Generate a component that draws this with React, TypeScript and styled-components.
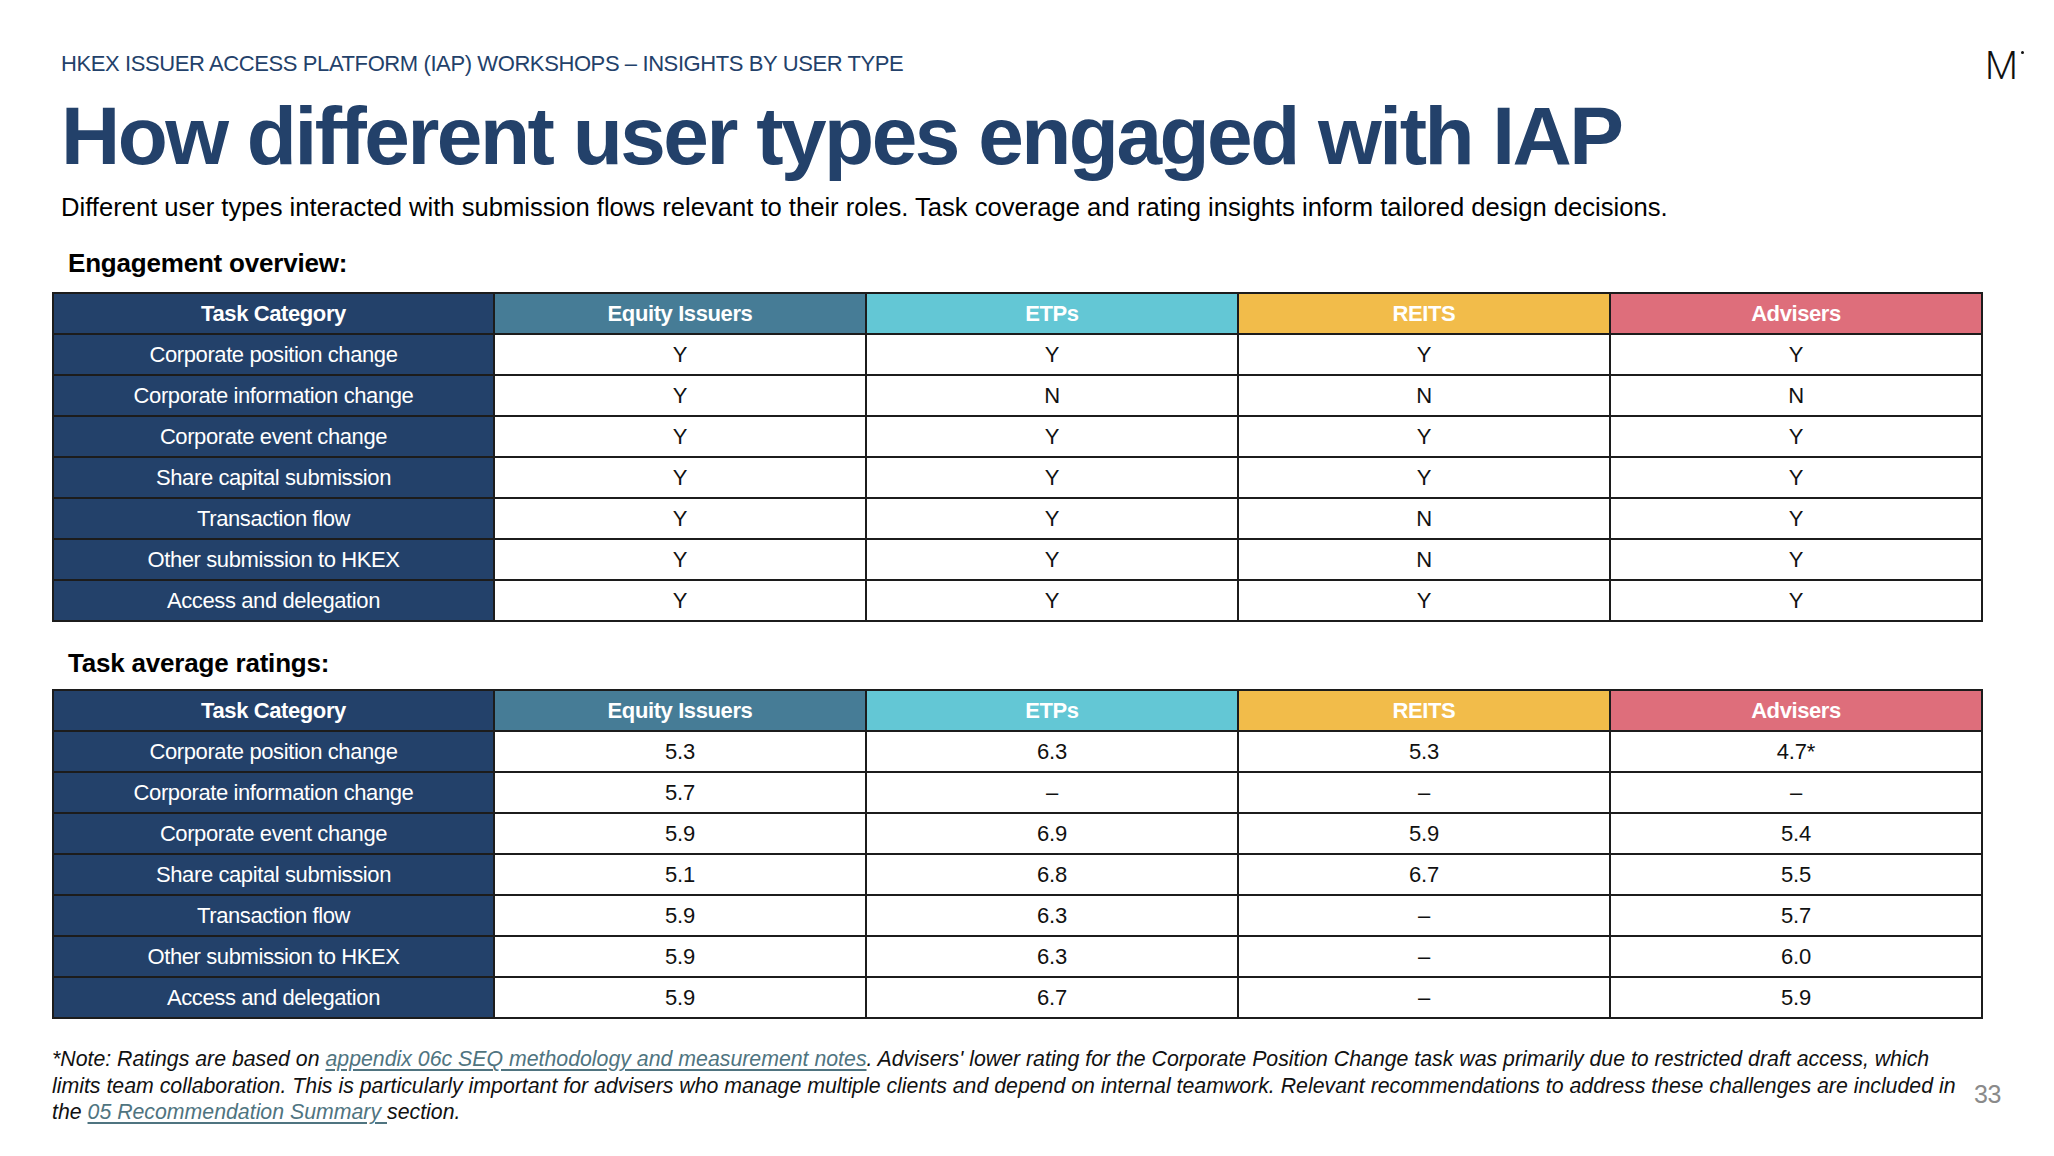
import React from 'react';
import styled, { createGlobalStyle } from 'styled-components';

const GlobalStyle = createGlobalStyle`
  html, body {
    margin: 0;
    padding: 0;
    background: #ffffff;
  }
  body {
    font-family: "Liberation Sans", Arial, sans-serif;
    color: #000000;
  }
`;

const navy = '#23416a';

const groups = [
  { label: 'Equity Issuers', color: '#467c96' },
  { label: 'ETPs', color: '#63c7d5' },
  { label: 'REITS', color: '#f2bc4a' },
  { label: 'Advisers', color: '#de6e7b' },
];

const tasks = [
  'Corporate position change',
  'Corporate information change',
  'Corporate event change',
  'Share capital submission',
  'Transaction flow',
  'Other submission to HKEX',
  'Access and delegation',
];

const engagement = [
  ['Y', 'Y', 'Y', 'Y'],
  ['Y', 'N', 'N', 'N'],
  ['Y', 'Y', 'Y', 'Y'],
  ['Y', 'Y', 'Y', 'Y'],
  ['Y', 'Y', 'N', 'Y'],
  ['Y', 'Y', 'N', 'Y'],
  ['Y', 'Y', 'Y', 'Y'],
];

const ratings = [
  ['5.3', '6.3', '5.3', '4.7*'],
  ['5.7', '–', '–', '–'],
  ['5.9', '6.9', '5.9', '5.4'],
  ['5.1', '6.8', '6.7', '5.5'],
  ['5.9', '6.3', '–', '5.7'],
  ['5.9', '6.3', '–', '6.0'],
  ['5.9', '6.7', '–', '5.9'],
];

const Slide = styled.div`
  width: 2054px;
  height: 1156px;
  box-sizing: border-box;
  padding: 43px 0 0 52px;
  overflow: hidden;
  display: flex;
  flex-direction: column;
`;

const TopBar = styled.div`
  display: flex;
  justify-content: space-between;
  align-items: center;
  padding-left: 9px;
`;

const Overline = styled.div`
  font-size: 22px;
  line-height: 26px;
  letter-spacing: -0.4px;
  color: ${navy};
`;

const Logo = styled.div`
  display: flex;
  align-items: flex-start;
  margin-right: 30px;
  margin-top: 4px;
  font-family: Roboto, "Open Sans", sans-serif;
  font-weight: 300;
  font-size: 38px;
  line-height: 38px;
  color: #111111;
`;

const LogoDot = styled.span`
  width: 3px;
  height: 3px;
  border-radius: 50%;
  background: #111111;
  margin: 4px 0 0 3px;
`;

const Title = styled.h1`
  margin: 6px 0 0 9px;
  font-size: 82px;
  line-height: 90px;
  font-weight: 700;
  letter-spacing: -2.5px;
  color: ${navy};
`;

const Subtitle = styled.p`
  margin: 12px 0 0 9px;
  font-size: 25.6px;
  line-height: 28px;
  letter-spacing: 0;
`;

const SectionLabel = styled.h2<{ $top: number; $bottom: number }>`
  margin: ${p => p.$top}px 0 ${p => p.$bottom}px 16px;
  font-size: 26px;
  line-height: 28px;
  font-weight: 700;
  letter-spacing: -0.2px;
`;

const Table = styled.table`
  width: 1931px;
  border-collapse: collapse;
  table-layout: fixed;
  border: 2px solid #1c1c1c;
`;

const HeadCell = styled.th<{ $bg: string }>`
  height: 39px;
  padding: 0;
  background: ${p => p.$bg};
  color: #ffffff;
  font-size: 22px;
  font-weight: 700;
  letter-spacing: -0.4px;
  text-align: center;
  border: 2px solid #1c1c1c;
`;

const TaskCell = styled.td`
  height: 39px;
  padding: 0;
  background: ${navy};
  color: #ffffff;
  font-size: 22px;
  letter-spacing: -0.4px;
  text-align: center;
  border: 2px solid #1c1c1c;
`;

const ValueCell = styled.td`
  height: 39px;
  padding: 0;
  background: #ffffff;
  color: #111111;
  font-size: 22px;
  letter-spacing: -0.2px;
  text-align: center;
  border: 2px solid #1c1c1c;
`;

const Footer = styled.div`
  display: flex;
  align-items: center;
  gap: 20px;
  margin-top: 27px;
`;

const Note = styled.p`
  margin: 0;
  width: 1902px;
  white-space: nowrap;
  font-size: 21.3px;
  line-height: 26.5px;
  font-style: italic;
  letter-spacing: 0;
  color: #111111;
`;

const NoteLink = styled.a`
  color: #4f7480;
  text-decoration: underline;
  text-underline-offset: 3px;
`;

const PageNumber = styled.span`
  margin-top: 18px;
  font-size: 25px;
  color: #8a8a8a;
  letter-spacing: -0.5px;
`;

const DataTable: React.FC<{ rows: string[][] }> = ({ rows }) => (
  <Table>
    <colgroup>
      <col style={{ width: 441 }} />
      {groups.map(g => (
        <col key={g.label} />
      ))}
    </colgroup>
    <thead>
      <tr>
        <HeadCell $bg={navy}>Task Category</HeadCell>
        {groups.map(g => (
          <HeadCell key={g.label} $bg={g.color}>
            {g.label}
          </HeadCell>
        ))}
      </tr>
    </thead>
    <tbody>
      {tasks.map((task, i) => (
        <tr key={task}>
          <TaskCell>{task}</TaskCell>
          {rows[i].map((v, j) => (
            <ValueCell key={j}>{v}</ValueCell>
          ))}
        </tr>
      ))}
    </tbody>
  </Table>
);

const App: React.FC = () => (
  <>
    <GlobalStyle />
    <Slide>
      <TopBar>
        <Overline>HKEX ISSUER ACCESS PLATFORM (IAP) WORKSHOPS – INSIGHTS BY USER TYPE</Overline>
        <Logo>
          M
          <LogoDot />
        </Logo>
      </TopBar>
      <Title>How different user types engaged with IAP</Title>
      <Subtitle>
        Different user types interacted with submission flows relevant to their roles. Task coverage and rating
        insights inform tailored design decisions.
      </Subtitle>

      <SectionLabel $top={28} $bottom={15}>Engagement overview:</SectionLabel>
      <DataTable rows={engagement} />

      <SectionLabel $top={27} $bottom={12}>Task average ratings:</SectionLabel>
      <DataTable rows={ratings} />

      <Footer>
        <Note>
          *Note: Ratings are based on <NoteLink href="#">appendix 06c SEQ methodology and measurement notes</NoteLink>.
          Advisers' lower rating for the Corporate Position Change task was primarily due to restricted draft access,
          which
          <br />
          limits team collaboration. This is particularly important for advisers who manage multiple clients and
          depend on internal teamwork. Relevant recommendations to address these challenges are included in
          <br />
          the <NoteLink href="#">05 Recommendation Summary </NoteLink>section.
        </Note>
        <PageNumber>33</PageNumber>
      </Footer>
    </Slide>
  </>
);

export default App;
